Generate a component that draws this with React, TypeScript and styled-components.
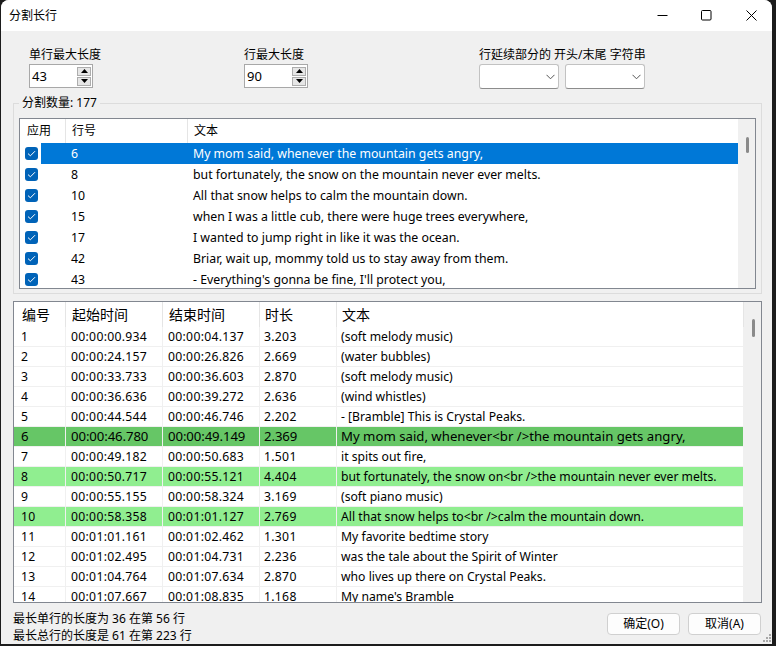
import React from "react";
import styled, { createGlobalStyle } from "styled-components";

const FONT = `"Noto Sans", "Noto Sans CJK SC", sans-serif`;

const Global = createGlobalStyle`
  html, body { margin: 0; padding: 0; background: #1c1c1c; }
  body { width: 776px; height: 646px; overflow: hidden; font-family: ${FONT}; }
  * { box-sizing: border-box; }
`;

const Window = styled.div`
  position: relative;
  margin-left: 1px;
  width: 771px;
  height: 644px;
  background: #f0f0f0;
  border-radius: 8px 8px 0 0;
  overflow: hidden;
  display: flex;
  flex-direction: column;
  color: #000;
  font-size: 12px;
`;

const TitleBar = styled.div`
  height: 31px;
  flex: none;
  background: #fff;
  display: flex;
  align-items: center;
  padding-left: 8px;
`;

const Title = styled.div`
  flex: 1;
  font-size: 12px;
  line-height: 16px;
`;

const WinBtn = styled.div<{ $w: number }>`
  width: ${(p) => p.$w}px;
  height: 31px;
  display: flex;
  align-items: center;
  justify-content: center;
`;

const Body = styled.div`
  flex: 1;
  min-height: 0;
  display: flex;
  flex-direction: column;
  padding: 0 10px 0 12px;
`;

const TopFields = styled.div`
  flex: none;
  height: 65px;
  display: flex;
  padding: 16px 0 0 16px;
`;

const Field = styled.div<{ $w?: number }>`
  width: ${(p) => (p.$w ? `${p.$w}px` : "auto")};
  display: flex;
  flex-direction: column;
  gap: 1px;
`;

const Label = styled.div`
  font-size: 12px;
  line-height: 16px;
  white-space: nowrap;
`;

const Spin = styled.div`
  width: 64px;
  height: 24px;
  border: 1px solid #a8a8a8;
  background: #fff;
  display: flex;
  align-items: center;
  padding: 0 1px 0 2px;
`;

const SpinValue = styled.div`
  flex: 1;
  font-size: 13px;
  line-height: 20px;
`;

const SpinButtons = styled.div`
  width: 14px;
  display: flex;
  flex-direction: column;
  gap: 1px;
`;

const SpinBtn = styled.div`
  height: 9px;
  border: 1px solid #adadad;
  background: #e6e6e6;
  display: flex;
  align-items: center;
  justify-content: center;
`;

const ComboRow = styled.div`
  display: flex;
  gap: 6px;
`;

const Combo = styled.div`
  width: 80px;
  height: 25px;
  background: #fff;
  border: 1px solid #c2c2c2;
  border-bottom-color: #8c8c8c;
  border-radius: 3px;
  display: flex;
  align-items: center;
  justify-content: flex-end;
  padding-right: 3px;
`;

const Group = styled.fieldset`
  flex: none;
  margin: 0;
  min-width: 0;
  padding: 8px 5px 4px 5px;
  border: 1px solid #dcdcdc;
`;

const Legend = styled.legend`
  padding: 0 3px;
  font-size: 12px;
  line-height: 14px;
`;

const ListBox = styled.div`
  height: 171px;
  border: 1px solid #828790;
  background: #fff;
  display: flex;
  overflow: hidden;
`;

const ListMain = styled.div`
  flex: 1;
  min-width: 0;
  display: flex;
  flex-direction: column;
`;

const ListHeader = styled.div`
  height: 24px;
  flex: none;
  display: flex;
`;

const ListHeadCell = styled.div<{ $w?: number; $pl: number }>`
  ${(p) => (p.$w ? `width: ${p.$w}px; flex: none; border-right: 1px solid #e5e5e5;` : "flex: 1;")}
  padding-left: ${(p) => p.$pl}px;
  font-size: 12px;
  line-height: 24px;
  white-space: nowrap;
`;

const ListRow = styled.div`
  height: 21px;
  flex: none;
  display: flex;
`;

const CheckCell = styled.div`
  width: 21px;
  flex: none;
  padding-left: 5px;
  display: flex;
  align-items: center;
`;

const CheckBox = styled.div`
  width: 13px;
  height: 13px;
  border-radius: 3px;
  background: #0063b8;
  display: flex;
  align-items: center;
  justify-content: center;
`;

const RowBody = styled.div<{ $selected?: boolean }>`
  flex: 1;
  min-width: 0;
  display: flex;
  background: ${(p) => (p.$selected ? "#0078d7" : "transparent")};
  color: ${(p) => (p.$selected ? "#fff" : "#000")};
  font-size: 12.3px;
  line-height: 21px;
  white-space: nowrap;
`;

const RowCell = styled.div<{ $w?: number; $pl: number }>`
  ${(p) => (p.$w ? `width: ${p.$w}px; flex: none;` : "flex: 1; min-width: 0;")}
  padding-left: ${(p) => p.$pl}px;
  overflow: hidden;
`;

const VScroll = styled.div<{ $top: number }>`
  width: 17px;
  flex: none;
  background: #f0f0f0;
  padding: ${(p) => p.$top}px 0 0 8px;
`;

const Thumb = styled.div<{ $h: number }>`
  width: 3px;
  height: ${(p) => p.$h}px;
  border-radius: 2px;
  background: #8a8a8a;
`;

const Grid = styled.div`
  flex: none;
  margin-top: 7px;
  height: 302px;
  border: 1px solid #828790;
  background: #fff;
  display: flex;
  overflow: hidden;
`;

const GridMain = styled.div`
  flex: 1;
  min-width: 0;
  display: flex;
  flex-direction: column;
`;

const COLS = "52px 97px 97px 77px 1fr";

const GridHeader = styled.div`
  flex: none;
  height: 25px;
  display: grid;
  grid-template-columns: ${COLS};
`;

const GridHeadCell = styled.div<{ $pl: number }>`
  padding-left: ${(p) => p.$pl}px;
  border-right: 1px solid #e5e5e5;
  font-size: 14px;
  line-height: 25px;
  white-space: nowrap;
`;

const GridRow = styled.div<{ $tone?: "dark" | "light" }>`
  flex: none;
  height: 20px;
  display: grid;
  grid-template-columns: ${COLS};
  background: ${(p) => (p.$tone === "dark" ? "#66c666" : p.$tone === "light" ? "#90ee90" : "#fff")};
  font-size: ${(p) => (p.$tone === "dark" ? "13.2px" : "12.2px")};
  --num-ls: ${(p) => (p.$tone === "dark" ? "-0.1px" : "0.3px")};
`;

const GridCell = styled.div<{ $pl: number; $num?: boolean }>`
  padding-left: ${(p) => p.$pl}px;
  border-right: 1px solid #f0f0f0;
  border-bottom: 1px solid #f0f0f0;
  line-height: 19px;
  white-space: nowrap;
  overflow: hidden;
  letter-spacing: ${(p) => (p.$num ? "var(--num-ls)" : "normal")};
`;

const Footer = styled.div`
  flex: 1;
  display: flex;
  justify-content: space-between;
`;

const Status = styled.div`
  padding-top: 7px;
  font-size: 12px;
  line-height: 17px;
  white-space: nowrap;
`;

const Buttons = styled.div`
  display: flex;
  gap: 8px;
  padding-top: 10px;
  margin-right: 1px;
`;

const Button = styled.div`
  width: 73px;
  height: 22px;
  border: 1px solid #d0d0d0;
  border-radius: 4px;
  background: #fdfdfd;
  display: flex;
  align-items: center;
  justify-content: center;
  font-size: 12px;
  line-height: 16px;
`;

const Grip = styled.svg`
  position: absolute;
  right: 0;
  bottom: 1px;
`;

const upperRows: [number, string][] = [
  [6, "My mom said, whenever the mountain gets angry,"],
  [8, "but fortunately, the snow on the mountain never ever melts."],
  [10, "All that snow helps to calm the mountain down."],
  [15, "when I was a little cub, there were huge trees everywhere,"],
  [17, "I wanted to jump right in like it was the ocean."],
  [42, "Briar, wait up, mommy told us to stay away from them."],
  [43, "- Everything's gonna be fine, I'll protect you,"],
];

type G = { n: number; s: string; e: string; d: string; t: string; tone?: "dark" | "light" };
const gridRows: G[] = [
  { n: 1, s: "00:00:00.934", e: "00:00:04.137", d: "3.203", t: "(soft melody music)" },
  { n: 2, s: "00:00:24.157", e: "00:00:26.826", d: "2.669", t: "(water bubbles)" },
  { n: 3, s: "00:00:33.733", e: "00:00:36.603", d: "2.870", t: "(soft melody music)" },
  { n: 4, s: "00:00:36.636", e: "00:00:39.272", d: "2.636", t: "(wind whistles)" },
  { n: 5, s: "00:00:44.544", e: "00:00:46.746", d: "2.202", t: "- [Bramble] This is Crystal Peaks." },
  { n: 6, s: "00:00:46.780", e: "00:00:49.149", d: "2.369", t: "My mom said, whenever<br />the mountain gets angry,", tone: "dark" },
  { n: 7, s: "00:00:49.182", e: "00:00:50.683", d: "1.501", t: "it spits out fire," },
  { n: 8, s: "00:00:50.717", e: "00:00:55.121", d: "4.404", t: "but fortunately, the snow on<br />the mountain never ever melts.", tone: "light" },
  { n: 9, s: "00:00:55.155", e: "00:00:58.324", d: "3.169", t: "(soft piano music)" },
  { n: 10, s: "00:00:58.358", e: "00:01:01.127", d: "2.769", t: "All that snow helps to<br />calm the mountain down.", tone: "light" },
  { n: 11, s: "00:01:01.161", e: "00:01:02.462", d: "1.301", t: "My favorite bedtime story" },
  { n: 12, s: "00:01:02.495", e: "00:01:04.731", d: "2.236", t: "was the tale about the Spirit of Winter" },
  { n: 13, s: "00:01:04.764", e: "00:01:07.634", d: "2.870", t: "who lives up there on Crystal Peaks." },
  { n: 14, s: "00:01:07.667", e: "00:01:08.835", d: "1.168", t: "My name's Bramble" },
];

const PADS = [7, 5, 5, 4, 4];

const Chevron = () => (
  <svg width="9" height="6" viewBox="0 0 9 6">
    <path d="M0.5 0.8 L4.5 4.8 L8.5 0.8" fill="none" stroke="#555" strokeWidth="1" />
  </svg>
);

const Tri = ({ up }: { up?: boolean }) => (
  <svg width="7" height="4" viewBox="0 0 7 4">
    <path d={up ? "M0 4 L3.5 0 L7 4 Z" : "M0 0 L3.5 4 L7 0 Z"} fill="#000" />
  </svg>
);

const SpinBox = ({ value }: { value: string }) => (
  <Spin>
    <SpinValue>{value}</SpinValue>
    <SpinButtons>
      <SpinBtn>
        <Tri up />
      </SpinBtn>
      <SpinBtn>
        <Tri />
      </SpinBtn>
    </SpinButtons>
  </Spin>
);

export default function App() {
  return (
    <>
      <Global />
      <Window>
        <TitleBar>
          <Title>分割长行</Title>
          <WinBtn $w={40}>
            <svg width="11" height="11" viewBox="0 0 11 11">
              <path d="M0.5 5.5 H10.5" stroke="#000" strokeWidth="1" />
            </svg>
          </WinBtn>
          <WinBtn $w={48}>
            <svg width="11" height="11" viewBox="0 0 11 11">
              <rect x="0.5" y="0.5" width="9.5" height="9.5" rx="1" fill="none" stroke="#000" strokeWidth="1" />
            </svg>
          </WinBtn>
          <WinBtn $w={42}>
            <svg width="11" height="11" viewBox="0 0 11 11">
              <path d="M0.5 0.5 L10.5 10.5 M10.5 0.5 L0.5 10.5" stroke="#000" strokeWidth="1" />
            </svg>
          </WinBtn>
        </TitleBar>
        <Body>
          <TopFields>
            <Field $w={215}>
              <Label>单行最大长度</Label>
              <SpinBox value="43" />
            </Field>
            <Field $w={235}>
              <Label>行最大长度</Label>
              <SpinBox value="90" />
            </Field>
            <Field>
              <Label>行延续部分的 开头/末尾 字符串</Label>
              <ComboRow>
                <Combo>
                  <Chevron />
                </Combo>
                <Combo>
                  <Chevron />
                </Combo>
              </ComboRow>
            </Field>
          </TopFields>

          <Group>
            <Legend>分割数量: 177</Legend>
            <ListBox>
              <ListMain>
                <ListHeader>
                  <ListHeadCell $w={46} $pl={7}>应用</ListHeadCell>
                  <ListHeadCell $w={122} $pl={6}>行号</ListHeadCell>
                  <ListHeadCell $pl={6}>文本</ListHeadCell>
                </ListHeader>
                {upperRows.map(([n, t], i) => (
                  <ListRow key={n}>
                    <CheckCell>
                      <CheckBox>
                        <svg width="9" height="7" viewBox="0 0 9 7">
                          <path d="M1 3.6 L3.4 5.8 L8 1.2" fill="none" stroke="#fff" strokeWidth="1" />
                        </svg>
                      </CheckBox>
                    </CheckCell>
                    <RowBody $selected={i === 0}>
                      <RowCell $w={147} $pl={30}>{n}</RowCell>
                      <RowCell $pl={5}>{t}</RowCell>
                    </RowBody>
                  </ListRow>
                ))}
              </ListMain>
              <VScroll $top={18}>
                <Thumb $h={16} />
              </VScroll>
            </ListBox>
          </Group>

          <Grid>
            <GridMain>
              <GridHeader>
                {["编号", "起始时间", "结束时间", "时长", "文本"].map((h, i) => (
                  <GridHeadCell key={h} $pl={PADS[i] + 1}>
                    {h}
                  </GridHeadCell>
                ))}
              </GridHeader>
              {gridRows.map((r) => (
                <GridRow key={r.n} $tone={r.tone}>
                  {[String(r.n), r.s, r.e, r.d, r.t].map((v, i) => (
                    <GridCell key={i} $pl={PADS[i]} $num={i < 4}>
                      {v}
                    </GridCell>
                  ))}
                </GridRow>
              ))}
            </GridMain>
            <VScroll $top={17}>
              <Thumb $h={18} />
            </VScroll>
          </Grid>

          <Footer>
            <Status>
              <div>最长单行的长度为 36 在第 56 行</div>
              <div>最长总行的长度是 61 在第 223 行</div>
            </Status>
            <Buttons>
              <Button>确定(O)</Button>
              <Button>取消(A)</Button>
            </Buttons>
          </Footer>
        </Body>
        <Grip width="9" height="9" viewBox="0 0 9 9">
          {[
            [6, 0],
            [3, 3],
            [6, 3],
            [0, 6],
            [3, 6],
            [6, 6],
          ].map(([x, y]) => (
            <rect key={`${x}-${y}`} x={x} y={y} width="2" height="2" fill="#a8a8a8" />
          ))}
        </Grip>
      </Window>
    </>
  );
}
